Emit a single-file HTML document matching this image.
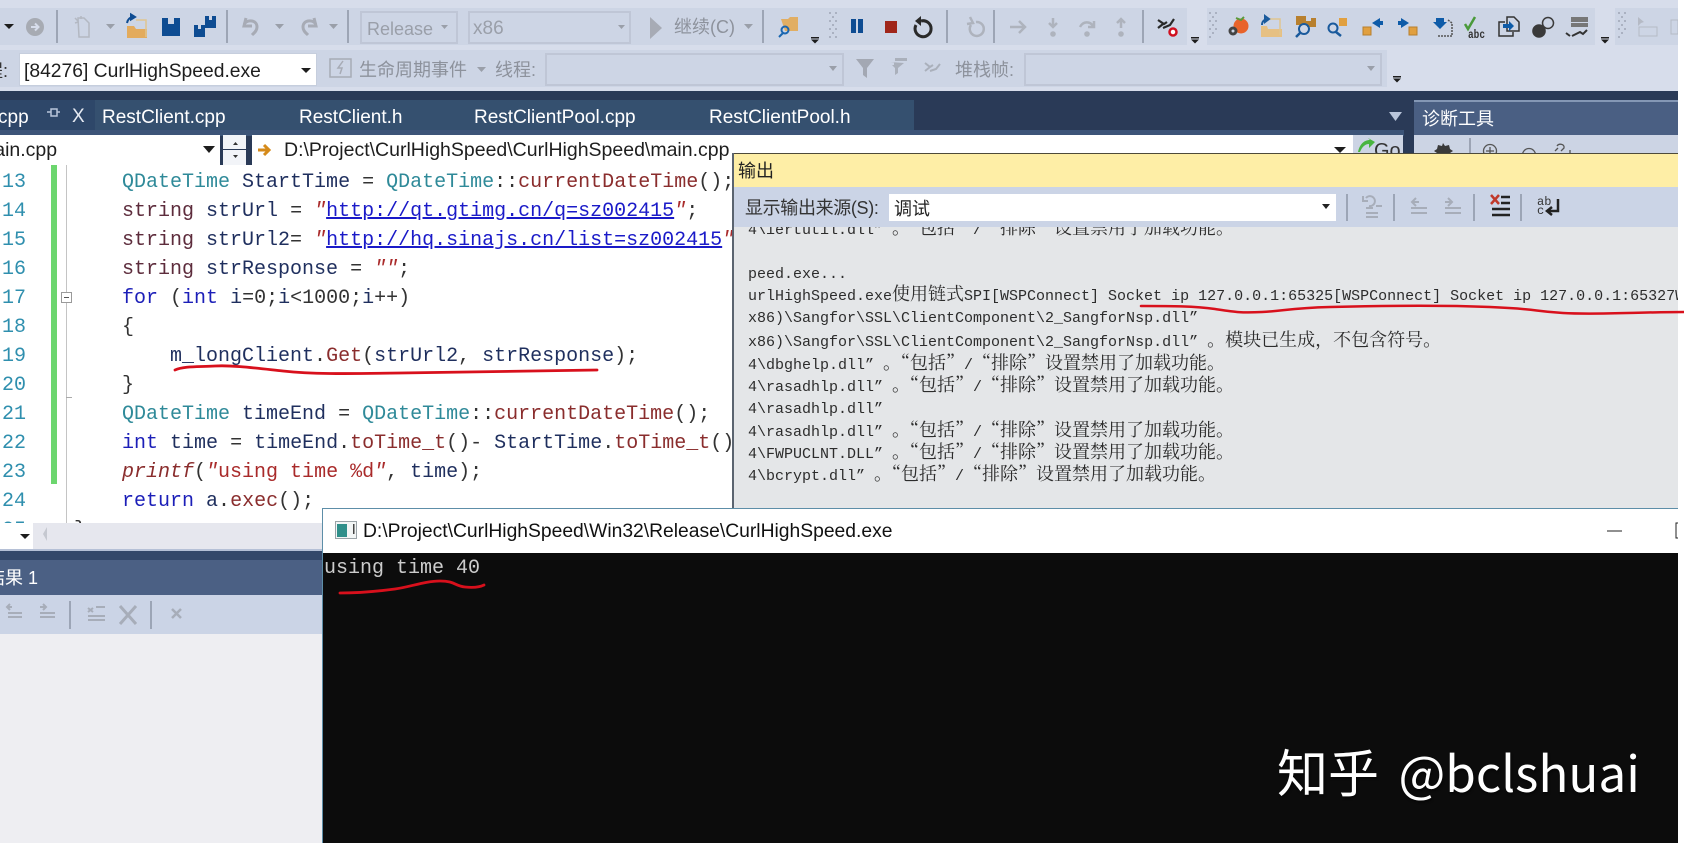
<!DOCTYPE html>
<html lang="zh-CN">
<head>
<meta charset="utf-8">
<title>CurlHighSpeed</title>
<style>
html,body{margin:0;padding:0;background:#fff}
#p{position:relative;width:1684px;height:843px;overflow:hidden;background:#fff;font-family:"Liberation Sans","Noto Sans CJK SC",sans-serif}
.a{position:absolute}
.t{position:absolute;white-space:pre}
.box{position:absolute;box-sizing:border-box}
svg{position:absolute;left:0;top:0}
.ed{position:absolute;font-family:"Liberation Mono","Noto Serif CJK SC",monospace;font-size:20px;line-height:29px;white-space:pre}
.k{color:#1c1fb8}.ty{color:#2f8a99}.v{color:#1f2f5e}.f{color:#8a2d2d}.s{color:#a92a2a}.o{color:#333}.st{color:#5d2c3c}
.u{color:#1a1ac8;text-decoration:underline}
.ol{position:absolute;left:748px;font-family:"Liberation Mono","Noto Serif CJK SC",monospace;font-size:15px;line-height:22px;height:22px;color:#2c2c2c;white-space:pre}
.ol b{font-weight:400;font-size:18px;line-height:0;font-family:"Noto Serif CJK SC","Noto Sans CJK SC",serif}
</style>
</head>
<body>
<div id="p">
<!-- base -->
<div class="a" style="left:0;top:0;width:1678px;height:91px;background:#d7ddeb"></div>
<div class="a" style="left:0;top:8px;width:1187px;height:37px;background:#cdd5e5"></div>
<div class="a" style="left:1207px;top:8px;width:388px;height:37px;background:#cdd5e5"></div>
<div class="a" style="left:1615px;top:8px;width:63px;height:37px;background:#cdd5e5"></div>
<div class="a" style="left:0;top:50px;width:1387px;height:37px;background:#cdd5e5"></div>
<!-- toolbar 1 boxes -->
<div class="box" style="left:360px;top:11px;width:98px;height:33px;border:2px solid #bfc6d6;background:#cdd5e5"></div>
<div class="box" style="left:468px;top:11px;width:163px;height:33px;border:2px solid #bfc6d6;background:#cdd5e5"></div>
<div class="t" style="left:367px;top:17px;font-size:18px;line-height:24px;color:#9a9fa9">Release</div>
<div class="t" style="left:473px;top:17px;font-size:19px;line-height:24px;color:#9a9fa9">x86</div>
<div class="t" style="left:674px;top:15px;font-size:18px;line-height:24px;color:#8d929c">继续(C)</div>
<!-- toolbar 2 -->
<div class="t" style="left:-15px;top:58px;font-size:18px;line-height:26px;color:#333">程:</div>
<div class="box" style="left:19px;top:53px;width:298px;height:33px;background:#fff;border:1px solid #c6cedd"></div>
<div class="t" style="left:24px;top:59px;font-size:19.300px;line-height:26px;color:#1e1e1e">[84276] CurlHighSpeed.exe</div>
<div class="t" style="left:359px;top:57px;font-size:18px;line-height:26px;color:#8d929c">生命周期事件</div>
<div class="t" style="left:495px;top:57px;font-size:18px;line-height:26px;color:#8d929c">线程:</div>
<div class="box" style="left:545px;top:53px;width:299px;height:33px;border:2px solid #bfc6d6"></div>
<div class="t" style="left:955px;top:57px;font-size:18px;line-height:26px;color:#8d929c">堆栈帧:</div>
<div class="box" style="left:1024px;top:53px;width:358px;height:33px;border:2px solid #bfc6d6"></div>
<!-- dark tabs band -->
<div class="a" style="left:0;top:91px;width:1678px;height:74px;background:#2a3a57"></div>
<div class="a" style="left:0;top:100px;width:95px;height:30px;background:#2e4769"></div>
<div class="a" style="left:95px;top:100px;width:819px;height:30px;background:#35506f"></div>
<div class="a" style="left:0;top:130px;width:1404px;height:6px;background:#3c5478"></div>
<div class="t" style="left:-2px;top:105px;font-size:19px;line-height:26px;color:#fff">cpp</div>
<div class="t" style="left:72px;top:104px;font-size:19px;line-height:26px;color:#e6eaf2">X</div>
<div class="t" style="left:102px;top:105px;font-size:19px;line-height:26px;color:#fff">RestClient.cpp</div>
<div class="t" style="left:299px;top:105px;font-size:19px;line-height:26px;color:#fff">RestClient.h</div>
<div class="t" style="left:474px;top:105px;font-size:19px;line-height:26px;color:#fff">RestClientPool.cpp</div>
<div class="t" style="left:709px;top:105px;font-size:19px;line-height:26px;color:#fff">RestClientPool.h</div>
<!-- nav -->
<div class="a" style="left:0;top:135px;width:220px;height:30px;background:#fff"></div>
<div class="a" style="left:223px;top:135px;width:23px;height:14px;background:#f2f4f8"></div>
<div class="a" style="left:223px;top:150px;width:23px;height:15px;background:#f2f4f8"></div>
<div class="a" style="left:252px;top:135px;width:1101px;height:30px;background:#fff"></div>
<div class="a" style="left:1353px;top:135px;width:50px;height:30px;background:#ccd4e4"></div>
<div class="t" style="left:-22px;top:137px;font-size:19.500px;line-height:26px;color:#1e1e1e">main.cpp</div>
<div class="t" style="left:284px;top:137px;font-size:19.500px;line-height:26px;color:#1e1e1e">D:\Project\CurlHighSpeed\CurlHighSpeed\main.cpp</div>
<div class="t" style="left:1374px;top:138px;font-size:20px;line-height:26px;color:#333">Go</div>
<!-- diagnostics -->
<div class="a" style="left:1414px;top:100px;width:264px;height:2px;background:#8497b5"></div>
<div class="a" style="left:1414px;top:102px;width:264px;height:33px;background:#4a5f83"></div>
<div class="a" style="left:1414px;top:135px;width:264px;height:30px;background:#ccd4e4"></div>
<div class="t" style="left:1422px;top:106px;font-size:18px;line-height:26px;color:#fff">诊断工具</div>
<!-- editor -->
<div class="a" style="left:0;top:165px;width:740px;height:358px;background:#fff;overflow:hidden">
  <div class="a" style="left:51px;top:0;width:6px;height:319px;background:#6cd66e"></div>
  <div class="a" style="left:66px;top:0;width:1px;height:358px;background:#c4c4c4"></div>
  <div class="box" style="left:61px;top:127px;width:11px;height:11px;border:1px solid #9a9a9a;background:#fff"></div>
  <div class="a" style="left:64px;top:132px;width:5px;height:1px;background:#555"></div>
  <div class="a" style="left:66px;top:232px;width:6px;height:1px;background:#aaa"></div>
  <div class="ed" style="left:2px;top:3px;color:#2f8fae">13
14
15
16
17
18
19
20
21
22
23
24
25</div>
  <div class="ed" style="left:122px;top:3px"><span class="ty">QDateTime</span> <span class="v">StartTime</span> <span class="o">=</span> <span class="ty">QDateTime</span><span class="o">::</span><span class="f">currentDateTime</span><span class="o">();</span>
<span class="st">string</span> <span class="v">strUrl</span> <span class="o">=</span> <span class="s"><i>"</i></span><span class="u">http://qt.gtimg.cn/q=sz002415</span><span class="s"><i>"</i></span><span class="o">;</span>
<span class="st">string</span> <span class="v">strUrl2</span><span class="o">=</span> <span class="s"><i>"</i></span><span class="u">http://hq.sinajs.cn/list=sz002415</span><span class="s"><i>"</i></span><span class="o">;</span>
<span class="st">string</span> <span class="v">strResponse</span> <span class="o">=</span> <span class="s"><i>""</i></span><span class="o">;</span>
<span class="k">for</span> <span class="o">(</span><span class="k">int</span> <span class="v">i</span><span class="o">=0;</span><span class="v">i</span><span class="o">&lt;1000;</span><span class="v">i</span><span class="o">++)</span>
<span class="o">{</span>
    <span class="v">m_longClient</span><span class="o">.</span><span class="f">Get</span><span class="o">(</span><span class="v">strUrl2</span><span class="o">,</span> <span class="v">strResponse</span><span class="o">);</span>
<span class="o">}</span>
<span class="ty">QDateTime</span> <span class="v">timeEnd</span> <span class="o">=</span> <span class="ty">QDateTime</span><span class="o">::</span><span class="f">currentDateTime</span><span class="o">();</span>
<span class="k">int</span> <span class="v">time</span> <span class="o">=</span> <span class="v">timeEnd</span><span class="o">.</span><span class="f">toTime_t</span><span class="o">()-</span> <span class="v">StartTime</span><span class="o">.</span><span class="f">toTime_t</span><span class="o">()</span>
<span class="f"><i>printf</i></span><span class="o">(</span><span class="s"><i>"</i>using time %d<i>"</i></span><span class="o">,</span> <span class="v">time</span><span class="o">);</span>
<span class="k">return</span> <span class="v">a</span><span class="o">.</span><span class="f">exec</span><span class="o">();</span></div>
  <div class="ed" style="left:74px;top:351px;color:#333">}</div>
</div>
<!-- editor bottom strip and results -->
<div class="a" style="left:0;top:523px;width:740px;height:26px;background:#e6e7ee"></div>
<div class="a" style="left:0;top:523px;width:33px;height:26px;background:#fff"></div>
<div class="a" style="left:0;top:549px;width:740px;height:2px;background:#b5c0d6"></div>
<div class="a" style="left:0;top:551px;width:740px;height:9px;background:#34486a"></div>
<div class="a" style="left:0;top:560px;width:740px;height:35px;background:#4b6084"></div>
<div class="a" style="left:0;top:595px;width:740px;height:39px;background:#cbd4e6"></div>
<div class="a" style="left:0;top:634px;width:740px;height:209px;background:#eeeef2"></div>
<div class="t" style="left:-13px;top:565px;font-size:18px;line-height:26px;color:#fff">结果 1</div>
<!-- lower icons -->
<svg width="1684" height="843" viewBox="0 0 1684 843">
  <g fill="#1d1d1d">
    <path d="M4 24h10l-5 5z"/><path d="M811 37h8v1.500h-8zM811 39.500h8l-4 4z"/>
    <path d="M1191 37h8v1.500h-8zM1191 39.500h8l-4 4z"/><path d="M1601 37h8v1.500h-8zM1601 39.500h8l-4 4z"/>
    <path d="M1393 76h8v1.500h-8zM1393 78.500h8l-4 4z"/>
    <path d="M301 68h10l-5 5z"/><path d="M203 146h12l-6 7z"/>
    <path d="M1334 147h12l-6 6z"/><path d="M20 534h10l-5 5z"/>
  </g>
  <g fill="#9a9fa9">
    <path d="M106 24h9l-4.500 5z"/><path d="M275 24h9l-4.500 5z"/><path d="M329 24h9l-4.500 5z"/>
    <path d="M441 25h7l-3.500 4z"/><path d="M618 25h7l-3.500 4z"/><path d="M744 24h9l-4.500 5z"/>
    <path d="M477 67h9l-4.500 5z"/><path d="M829 66h8l-4 5z"/><path d="M1367 66h8l-4 5z"/>
    <path d="M650 17l12 11-12 11z" fill="#a7abb5"/>
  </g>
  <path d="M1389 112h13l-6.500 9z" fill="#b9c5da"/>
  <path d="M47 527v14l-4-7z" fill="#c5c8d0"/>
  <!-- separators -->
  <g stroke="#8d95a5" stroke-width="1.500" fill="none">
    <path d="M57 10v33M227 10v33M348 10v33M763 10v33M947 10v33M994 10v33M1143 10v33"/>
    <path d="M1470 138v15"/>
    <path d="M70 601v28M151 601v28"/>
  </g>
  <!-- circle back -->
  <circle cx="35" cy="27" r="9" fill="#a7abb3"/><path d="M31 27h7m-3-3.500 3.500 3.500-3.500 3.500" stroke="#d7ddeb" stroke-width="2" fill="none"/>
  <!-- ghost new -->
  <g fill="none" stroke="#b3b8c2" stroke-width="1.500"><path d="M78 18h6l5 5v14h-10z"/><path d="M75 18l3 3m-3 2l3-1m3-6v3"/></g>
  <!-- open -->
  <path d="M127 26h7l2 3h11v9h-20z" fill="#e3ab5d"/><path d="M136 20h10v17" fill="none" stroke="#e0c590" stroke-width="1.500"/><path d="M127 23c1-5 4-6 7-6m-3-2.500 4 2.500-4 2.500z" stroke="#0e4c92" stroke-width="2" fill="none"/>
  <!-- save -->
  <path d="M162 18h18v18h-18zM168 18v6h6v-6z" fill="#0e4c92" fill-rule="evenodd"/>
  <path d="M194 25h11v12h-11zM198 25v4h3v-4zM205 16h11v12h-11zM209 16v4h3v-4z" fill="#0e4c92" fill-rule="evenodd"/>
  <!-- undo/redo -->
  <path d="M246 18l-2 8 8 0M244 24c4-5 13-4 13 3 0 4-3 6-5 8" fill="none" stroke="#a7abb5" stroke-width="3"/>
  <path d="M314 18l2 8-8 0M316 24c-4-5-13-4-13 3 0 4 3 6 5 8" fill="none" stroke="#a7abb5" stroke-width="3"/>
  <!-- find folder -->
  <path d="M781 19h7l2-2h8v14h-13z" fill="#e1ae63"/><circle cx="785" cy="30" r="3.500" fill="none" stroke="#1a66b0" stroke-width="2"/><path d="M783 33l-4 4" stroke="#1a66b0" stroke-width="2"/>
  <g fill="#aab1c1"><path d="M829 12h2v2h-2zM835 12h2v2h-2zM832 16h2v2h-2zM829 20h2v2h-2zM835 20h2v2h-2zM832 24h2v2h-2zM829 28h2v2h-2zM835 28h2v2h-2zM832 32h2v2h-2zM829 36h2v2h-2zM835 36h2v2h-2z"/>
  <path d="M1209 12h2v2h-2zM1215 12h2v2h-2zM1212 16h2v2h-2zM1209 20h2v2h-2zM1215 20h2v2h-2zM1212 24h2v2h-2zM1209 28h2v2h-2zM1215 28h2v2h-2zM1212 32h2v2h-2zM1209 36h2v2h-2z"/>
  <path d="M1618 12h2v2h-2zM1624 12h2v2h-2zM1621 16h2v2h-2zM1618 20h2v2h-2zM1624 20h2v2h-2zM1621 24h2v2h-2zM1618 28h2v2h-2zM1624 28h2v2h-2zM1621 32h2v2h-2zM1618 36h2v2h-2z"/></g>
  <!-- pause stop restart -->
  <path d="M851 19h5v14h-5zM858 19h5v14h-5z" fill="#0e4c92"/><rect x="885" y="21" width="12" height="12" fill="#a0261a"/>
  <path d="M921 21a8 8 0 1 1-5 4" fill="none" stroke="#2a2a2a" stroke-width="3"/><path d="M921 16v10l-6-5z" fill="#2a2a2a"/>
  <path d="M976 22a7 7 0 1 1-5 3M970 17l3 6-6 1" fill="none" stroke="#aeb3bd" stroke-width="2.500"/>
  <!-- step -->
  <g fill="none" stroke="#aeb3bd" stroke-width="2.500"><path d="M1010 27h14m-5-6 6 6-6 6"/><path d="M1053 18v9m-4-4 4 4 4-4"/><path d="M1080 27c3-6 10-6 13-1m1-5v6h-6"/><path d="M1121 28v-9m-4 4 4-4 4 4"/></g>
  <circle cx="1053" cy="34" r="2.800" fill="#aeb3bd"/><circle cx="1087" cy="34" r="2.800" fill="#aeb3bd"/><circle cx="1121" cy="34" r="2.800" fill="#aeb3bd"/>
  <!-- breakpoint toggle -->
  <path d="M1158 20l6 4 3-2m-9 6l5-4m0 4 7-3 4-6" fill="none" stroke="#2a2a2a" stroke-width="2.200"/><circle cx="1173" cy="32" r="3.500" fill="#fff" stroke="#d01020" stroke-width="2.500"/>
  <!-- debug toolbar right -->
  <circle cx="1241" cy="26" r="7.500" fill="#e8632a"/><path d="M1236 18l5 2 3-3" stroke="#5a9a3a" stroke-width="2" fill="none"/><circle cx="1233" cy="31" r="4.500" fill="#444"/><circle cx="1233" cy="31" r="1.500" fill="#cdd5e5"/>
  <path d="M1261 26h6l1 3h14v8h-21z" fill="#e6c083"/><path d="M1270 19h10v16" fill="none" stroke="#e0c590" stroke-width="1.500"/><path d="M1262 25c0-4 3-6 6-6m-3-3 4 3-4 3z" stroke="#1a5a9c" stroke-width="2" fill="none"/>
  <path d="M1296 16h10v5h5v-3h5v9h-9v-2h-11z" fill="#b8802e"/><circle cx="1304" cy="29" r="5" fill="none" stroke="#1a5a9c" stroke-width="2"/><path d="M1300 33l-4 4" stroke="#1a5a9c" stroke-width="2.500"/>
  <circle cx="1333" cy="28" r="4.500" fill="none" stroke="#1a5a9c" stroke-width="2"/><path d="M1336 32l5 4" stroke="#1a5a9c" stroke-width="2.500"/><rect x="1339" y="18" width="8" height="8" fill="#e1a040"/>
  <rect x="1363" y="27" width="8" height="8" fill="#e1a040" stroke="#b8802e"/><path d="M1372 23l8-5v3h3v4h-3v3z" fill="#0e5ba8"/>
  <rect x="1409" y="27" width="8" height="8" fill="#e1a040" stroke="#b8802e"/><path d="M1409 23l-8-5v3h-3v4h3v3z" fill="#0e5ba8"/>
  <path d="M1436 18h8v4h3l-7 7-7-7h3z" fill="#0e5ba8"/><path d="M1448 20l4 3v13h-14" fill="none" stroke="#555" stroke-width="1.500" stroke-dasharray="2 1"/>
  <path d="M1465 24l3 5 7-12" fill="none" stroke="#4a9a3a" stroke-width="2.500"/><text x="1468" y="38" font-family="Liberation Mono" font-size="12" font-weight="700" textLength="17" lengthAdjust="spacingAndGlyphs" fill="#333">abc</text>
  <path d="M1505 22h-6v14h14v-4M1507 17h7l5 5v9h-12z" fill="none" stroke="#333" stroke-width="1.500"/><path d="M1503 24h6v-3l5 5-5 5v-3h-6z" fill="#0e5ba8"/>
  <circle cx="1539" cy="31" r="6.800" fill="#3a3a3a"/><circle cx="1548" cy="23" r="5.500" fill="none" stroke="#3a3a3a" stroke-width="1.500"/>
  <g fill="#777"><rect x="1571" y="17" width="17" height="5"/><rect x="1571" y="23" width="17" height="4"/></g><path d="M1566 33l4 3M1572 36l8-4 3 2 4-4" stroke="#333" stroke-width="2" fill="none"/>
  <path d="M1638 17v9l3-3 3-1z" fill="#b5bac5"/><rect x="1639" y="27" width="18" height="9" fill="none" stroke="#b5bac5"/><rect x="1671" y="20" width="7" height="14" fill="none" stroke="#b5bac5"/>
  <!-- row 2 -->
  <rect x="330" y="59" width="21" height="18" fill="none" stroke="#a7abb5" stroke-width="1.500"/><path d="M343 61l-5 7h4l-2 6" stroke="#a7abb5" fill="none" stroke-width="1.500"/>
  <path d="M856 59h18l-7 9v10l-4-3v-7z" fill="#a3a8b3"/><path d="M890 62l4 0v3l-2 0 3 3v7l3-2v-5l6-5zM895 58h12v3h-12z" fill="#aab0bb"/>
  <path d="M925 63l5 4 3-2m-8 6l5-4m0 4 6-2 4-5" fill="none" stroke="#aab0bb" stroke-width="2"/>
  <!-- pin -->
  <path d="M47 115h0M47 112h4m0-3v7h6v-7zM57 112h3" fill="none" stroke="#b9c5da" stroke-width="1.500"/>
  <!-- nav icons -->
  <path d="M258 150h10m-4-5 5 5-5 5" fill="none" stroke="#d58a1a" stroke-width="3"/>
  <path d="M233 145l2.500-3 2.500 3z" fill="#333"/><path d="M233 155l2.500 3 2.500-3z" fill="#333"/>
  <path d="M1358 152c2-9 7-12 12-12l-2-2 7 4-6 6v-4c-4 0-7 3-9 8z" fill="#49b53f"/>
  <!-- diagnostics toolbar -->
  <path d="M1443 143l2 3 4-1 1 4 3 2-3 2h-13l-3-2 3-2 1-4 4 1z" fill="#3a3a3a"/>
  <g fill="none" stroke="#555" stroke-width="1.300"><circle cx="1490" cy="151" r="6.500"/><path d="M1490 147v8m-4-4h8"/><circle cx="1529" cy="155" r="6.500"/><path d="M1525 155h8"/><path d="M1557 146c2-3 8-2 7 2l-3 3m-6 0l3-3"/><path d="M1570 150v3"/></g>
  <!-- results toolbar -->
  <g fill="none" stroke="#a7adb9" stroke-width="2">
    <path d="M12 607h-5m3-3-3 3 3 3M8 613h14M8 617h14"/><path d="M40 607h6m-3-3 3 3-3 3M40 613h15M40 617h15"/>
    <path d="M88 608l5 4m0-4-5 4M96 607h9M88 616h17M88 620h17"/><path d="M120 606l16 18m0-18-16 18" stroke-width="3"/><path d="M172 609l9 9m0-9-9 9" stroke-width="2.500"/>
  </g>
</svg>

<!-- output window -->
<div class="a" style="left:732px;top:153px;width:946px;height:355px;background:#e4e6e8;border-left:2px solid #5b6470;box-sizing:border-box;overflow:hidden">
  <div class="a" style="left:0;top:0;width:946px;height:1px;background:#4d4a3a"></div>
  <div class="a" style="left:0;top:1px;width:946px;height:33px;background:#feeea6"></div>
  <div class="a" style="left:0;top:34px;width:946px;height:40px;background:#cbd4e6"></div>
  <div class="t" style="left:4px;top:5px;font-size:18px;line-height:26px;color:#222">输出</div>
  <div class="t" style="left:11px;top:42px;font-size:18px;line-height:26px;color:#333;letter-spacing:-.35px">显示输出来源(S):</div>
  <div class="box" style="left:155px;top:41px;width:447px;height:27px;background:#fff"></div>
  <div class="t" style="left:160px;top:43px;font-size:18px;line-height:26px;color:#222">调试</div>
</div>
<div class="a" style="left:734px;top:227px;width:944px;height:281px;overflow:hidden">
  <div class="ol" style="left:14px;top:-7px">4\iertutil.dll” <b>。“包括”</b>/<b>“排除”设置禁用了加载功能。</b></div>
  <div class="ol" style="left:14px;top:37px">peed.exe...</div>
  <div class="ol" style="left:14px;top:59px">urlHighSpeed.exe<b>使用链式</b>SPI[WSPConnect] Socket ip 127.0.0.1:65325[WSPConnect] Socket ip 127.0.0.1:65327W</div>
  <div class="ol" style="left:14px;top:81px">x86)\Sangfor\SSL\ClientComponent\2_SangforNsp.dll”</div>
  <div class="ol" style="left:14px;top:105px">x86)\Sangfor\SSL\ClientComponent\2_SangforNsp.dll” <b>。模块已生成，不包含符号。</b></div>
  <div class="ol" style="left:14px;top:128px">4\dbghelp.dll” <b>。“包括”</b>/<b>“排除”设置禁用了加载功能。</b></div>
  <div class="ol" style="left:14px;top:150px">4\rasadhlp.dll” <b>。“包括”</b>/<b>“排除”设置禁用了加载功能。</b></div>
  <div class="ol" style="left:14px;top:172px">4\rasadhlp.dll”</div>
  <div class="ol" style="left:14px;top:195px">4\rasadhlp.dll” <b>。“包括”</b>/<b>“排除”设置禁用了加载功能。</b></div>
  <div class="ol" style="left:14px;top:217px">4\FWPUCLNT.DLL” <b>。“包括”</b>/<b>“排除”设置禁用了加载功能。</b></div>
  <div class="ol" style="left:14px;top:239px">4\bcrypt.dll” <b>。“包括”</b>/<b>“排除”设置禁用了加载功能。</b></div>
</div>

<!-- console window -->
<div class="a" style="left:322px;top:508px;width:1356px;height:335px;background:#fff;border-left:1px solid #5d8ea8;box-sizing:border-box">
  <div class="a" style="left:0;top:0;width:1356px;height:1px;background:#5d8ea8"></div>
  <div class="t" style="left:40px;top:11px;font-size:19.300px;line-height:26px;color:#111">D:\Project\CurlHighSpeed\Win32\Release\CurlHighSpeed.exe</div>
  <div class="a" style="left:0;top:45px;width:1356px;height:290px;background:#0c0c0c"></div>
  <div class="t" style="left:1px;top:46px;font-family:'Liberation Mono',monospace;font-size:20px;line-height:29px;color:#cccccc">using time 40</div>
</div>
<div class="a" style="left:1678px;top:0;width:6px;height:843px;background:#fff"></div>
<div class="t" style="left:1277px;top:733px;font-family:'Noto Sans CJK SC',sans-serif;font-size:51px;line-height:75px;color:#fff;text-shadow:1px 2px 2px rgba(0,0,0,.5)">知乎 <span style="font-size:49.500px;margin-left:8px">@bclshuai</span></div>

<!-- upper overlay icons and red marks -->
<svg width="1684" height="843" viewBox="0 0 1684 843">
  <!-- console title icon and buttons -->
  <rect x="335.500" y="521.500" width="21" height="17" fill="#f2f5f5" stroke="#9aa3a8"/><rect x="337" y="524" width="10" height="13" fill="#2f8f8a"/><rect x="353" y="524" width="1.500" height="10" fill="#444"/>
  <path d="M1607 531h15" stroke="#222" stroke-width="1"/><path d="M1678 523h-2v15h2" stroke="#222" fill="none"/>
  <!-- output toolbar -->
  <path d="M1322 204h8l-4 5z" fill="#222"/>
  <g stroke="#8d95a5" stroke-width="1.500" fill="none"><path d="M1347 194v27M1394 194v27M1474 194v27M1521 194v27"/></g>
  <g fill="none" stroke="#a7adb9" stroke-width="2">
    <path d="M1366 198a5 5 0 1 1 3 8M1363 196v5h5M1366 208h7M1376 206h6M1366 213h12M1366 217h12"/>
    <path d="M1419 202h-7m4-4-4 4 4 4M1411 208h16M1411 213h16"/><path d="M1445 202h7m-4-4 4 4-4 4M1445 208h16M1445 213h16"/>
  </g>
  <path d="M1491 195l8 9m0-9-8 9" stroke="#c0392b" stroke-width="2.500" fill="none"/><path d="M1501 197h9M1501 203h9M1492 209h18M1492 215h18" stroke="#222" stroke-width="2.600" fill="none"/>
  <text x="1537" y="205" font-family="Liberation Mono" font-size="12" fill="#333">ab</text><text x="1537" y="214" font-family="Liberation Mono" font-size="12" fill="#333">c</text>
  <path d="M1558 199v12h-10m4-4-5 4 5 4" stroke="#222" stroke-width="2.500" fill="none"/>
  <!-- red marks -->
  <g fill="none" stroke="#d8101c" stroke-linecap="round" stroke-linejoin="round">
    <path d="M175 370C184 366 198 367 215 366 S255 368 283 371 340 374 400 373 520 371 597 370" stroke-width="2.800"/>
    <path d="M1141 306C1170 306 1195 306 1215 309S1240 313 1262 312 1290 308 1330 307 1440 305 1490 307 1530 311 1563 313 1640 312 1684 312" stroke-width="2.500"/>
    <path d="M340 593C360 593 380 591 395 589S425 581 440 581 455 586 465 587 480 587 484 585" stroke-width="2.800"/>
  </g>
</svg>
</div>
</body>
</html>
